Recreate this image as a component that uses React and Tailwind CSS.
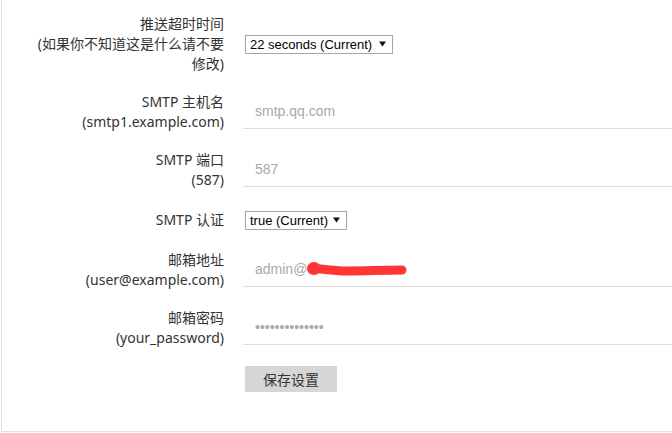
import React from "react";

const labelFont = "font-['Noto_Sans','Noto_Sans_CJK_SC',sans-serif]";
const fieldFont = "font-['Liberation_Sans',Arial,sans-serif]";

const Arrow = () => (
  <svg width="7" height="6" viewBox="0 0 7 6" className="shrink-0">
    <polygon points="0,0.5 7,0.5 3.5,5.5" fill="#111" />
  </svg>
);

const FakeSelect = ({ value, width }) => (
  <div
    className={`ml-[2px] flex h-[19px] items-center justify-between border border-[#a6a6a6] bg-white pl-[4px] pr-[6px] text-[13px] text-black ${fieldFont}`}
    style={{ width }}
  >
    <span className="whitespace-nowrap leading-none">{value}</span>
    <Arrow />
  </div>
);

const TextField = ({ value, muted = true, children }) => (
  <div className="relative flex h-[33px] flex-1 items-center border-b border-[#dedede] pl-[12px]">
    <span className={`text-[14px] ${muted ? "text-[#a9a9a9]" : "text-black"} ${fieldFont}`}>
      {value}
    </span>
    {children}
  </div>
);

const Row = ({ lines, className = "", children }) => (
  <div className={`flex items-center ${className}`}>
    <div className={`w-[222px] shrink-0 text-right text-[14px] leading-[20px] text-[#333] ${labelFont}`}>
      {lines.map((l) => (
        <div key={l} className="whitespace-nowrap">
          {l}
        </div>
      ))}
    </div>
    <div className="ml-[19px] flex flex-1 items-center">{children}</div>
  </div>
);

export default function App() {
  return (
    <div className="h-[433px] w-[672px] overflow-hidden bg-white">
      <div className="ml-px h-[432px] border-b border-l border-[#e2e2e2] pt-[14px]">
        <Row lines={["推送超时时间", "(如果你不知道这是什么请不要", "修改)"]}>
          <FakeSelect value="22 seconds (Current)" width={148} />
        </Row>

        <Row lines={["SMTP 主机名", "(smtp1.example.com)"]} className="mt-[18px]">
          <TextField value="smtp.qq.com" />
        </Row>

        <Row lines={["SMTP 端口", "(587)"]} className="mt-[18px]">
          <TextField value="587" />
        </Row>

        <Row lines={["SMTP 认证"]} className="mt-[20px]">
          <FakeSelect value="true (Current)" width={102} />
        </Row>

        <Row lines={["邮箱地址", "(user@example.com)"]} className="mt-[20px]">
          <TextField value="admin@9">
            {/* redaction stroke over the address */}
            <svg
              className="absolute left-[61px] top-[5px]"
              width="104"
              height="20"
              viewBox="0 0 104 20"
            >
              <path
                d="M8 10 C 16 9, 28 12, 44 12 S 80 11, 98 11"
                stroke="#ff3535"
                strokeWidth="9"
                strokeLinecap="round"
                fill="none"
              />
              <ellipse cx="10" cy="9.5" rx="7" ry="6.5" fill="#ff3535" />
            </svg>
          </TextField>
        </Row>

        <Row lines={["邮箱密码", "(your_password)"]} className="mt-[18px]">
          <TextField value={"\u2022".repeat(14)} />
        </Row>

        <div className="ml-[243px] mt-[18px]">
          <button
            className={`h-[26px] w-[92px] bg-[#d6d6d6] text-[14px] text-[#333] ${labelFont}`}
          >
            保存设置
          </button>
        </div>
      </div>
    </div>
  );
}
